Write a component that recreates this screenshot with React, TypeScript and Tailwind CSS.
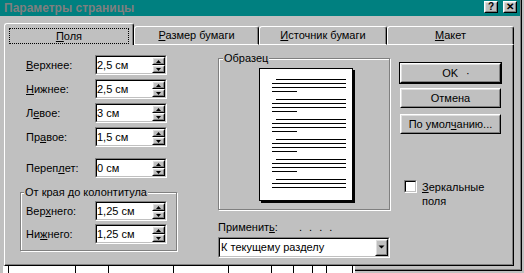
import React from "react";

const FONT = "font-['Liberation_Sans',Arial,sans-serif]";

function Sunken({ className = "", children }: { className?: string; children?: React.ReactNode }) {
  return (
    <div className={`border border-t-[#808080] border-l-[#808080] border-b-white border-r-white ${className}`}>
      <div className="h-full w-full border border-t-black border-l-black border-b-[#c0c0c0] border-r-[#c0c0c0] bg-white flex items-center">
        {children}
      </div>
    </div>
  );
}

function Raised({ className = "", children }: { className?: string; children?: React.ReactNode }) {
  return (
    <div className={`border border-t-white border-l-white border-b-black border-r-black bg-[#c0c0c0] ${className}`}>
      <div className="h-full w-full border border-t-[#dfdfdf] border-l-[#dfdfdf] border-b-[#808080] border-r-[#808080] flex items-center justify-center">
        {children}
      </div>
    </div>
  );
}

function Tri({ up }: { up?: boolean }) {
  return (
    <svg width="5" height="3" viewBox="0 0 5 3" className="block">
      {up ? <path d="M2.5 0 L5 3 L0 3 Z" fill="black" /> : <path d="M0 0 L5 0 L2.5 3 Z" fill="black" />}
    </svg>
  );
}

function SpinField({ value }: { value: string }) {
  return (
    <Sunken className="w-[72px] h-[20px]">
      <span className="flex-1 pl-[0px]">{value}</span>
      <div className="flex flex-col h-full w-[13px]">
        <Raised className="h-[8px] w-[13px]">
          <Tri up />
        </Raised>
        <Raised className="h-[8px] w-[13px]">
          <Tri />
        </Raised>
      </div>
    </Sunken>
  );
}

function Row({ label, value, labelW }: { label: React.ReactNode; value: string; labelW: string }) {
  return (
    <div className="flex items-center h-[20px]">
      <span className={labelW}>{label}</span>
      <SpinField value={value} />
    </div>
  );
}

function TitleBtn({ children }: { children: React.ReactNode }) {
  return (
    <Raised className="w-[14px] h-[12px]">
      <span className="text-[10px] font-bold leading-none">{children}</span>
    </Raised>
  );
}

function Tab({ w, children }: { w: string; children: React.ReactNode }) {
  return (
    <div
      className={`${w} h-[19px] border-t border-l border-white border-r border-r-black border-b border-b-white rounded-tl-[3px] rounded-tr-[3px] shadow-[inset_-1px_0_0_#808080] flex items-center justify-center`}
    >
      {children}
    </div>
  );
}

function Btn({ w = "w-[101px]", children }: { w?: string; children: React.ReactNode }) {
  return <Raised className={`${w} h-[20px]`}>{children}</Raised>;
}

function PageLines({ count }: { count: number }) {
  const widths = ["ml-[16px] w-[70px]", "ml-[12px] w-[74px]", "ml-[12px] w-[74px]", "ml-[12px] w-[25px]"];
  return (
    <div className="flex flex-col gap-[3px]">
      {widths.slice(0, count).map((c, i) => (
        <div key={i} className={`h-[1px] bg-black ${c}`} />
      ))}
    </div>
  );
}

const TICKS = [5, 72, 105, 170, 225, 268, 290, 309, 323, 349];

export default function App() {
  return (
    <div className={`w-[524px] h-[273px] overflow-hidden bg-[#c0c0c0] ${FONT} text-[11px] text-black leading-none flex flex-col`}>
      <div className="w-[522px] border-r border-black">
        <div className="border-r border-[#808080]">
          {/* title bar */}
          <div className="h-[16px] bg-[#008080] flex items-center justify-between pl-[4px] pr-[3px]">
            <span className="text-[12px] font-bold text-[#7f7f7f]">Параметры страницы</span>
            <div className="flex gap-[5px] self-start mt-[1px]">
              <TitleBtn>?</TitleBtn>
              <TitleBtn>✕</TitleBtn>
            </div>
          </div>

          {/* body */}
          <div className="pl-[4px] pr-[6px] pt-[7px]">
            {/* tabs */}
            <div className="flex items-end h-[22px]">
              <div className="w-[130px] h-[22px] border-t border-l border-white border-r border-r-black rounded-tl-[3px] rounded-tr-[3px] shadow-[inset_-1px_0_0_#808080] pt-[4px] pl-[4px]">
                <div className="w-[120px] h-[16px] border border-dotted border-black flex items-center justify-center">
                  <span>
                    <u>П</u>оля
                  </span>
                </div>
              </div>
              <Tab w="w-[125px]">
                <span>
                  <u>Р</u>азмер бумаги
                </span>
              </Tab>
              <Tab w="w-[128px]">
                <span>
                  <u>И</u>сточник бумаги
                </span>
              </Tab>
              <Tab w="w-[127px]">
                <span>
                  <u>М</u>акет
                </span>
              </Tab>
            </div>

            {/* panel */}
            <div className="h-[221px] border-l border-white border-r border-b border-r-black border-b-black shadow-[inset_-1px_-1px_0_#808080] flex">
              {/* left column */}
              <div className="ml-[15px] w-[157px] pt-[10px] flex flex-col">
                <div className="flex flex-col gap-[4px]">
                  <Row labelW="w-[75px] pl-[6px]" label={<><u>В</u>ерхнее:</>} value="2,5 см" />
                  <Row labelW="w-[75px] pl-[6px]" label={<><u>Н</u>ижнее:</>} value="2,5 см" />
                  <Row labelW="w-[75px] pl-[6px]" label={<>Л<u>е</u>вое:</>} value="3 см" />
                  <Row labelW="w-[75px] pl-[6px]" label={<>Пр<u>а</u>вое:</>} value="1,5 см" />
                </div>
                <div className="mt-[11px]">
                  <Row labelW="w-[75px] pl-[6px]" label={<>Переп<u>л</u>ет:</>} value="0 см" />
                </div>
                <div className="mt-[14px] relative h-[59px] border border-[#808080] shadow-[1px_1px_0_white,inset_1px_1px_0_white] pt-[8px] flex flex-col gap-[3px]">
                  <span className="absolute left-[3px] -top-[6px] bg-[#c0c0c0] px-[1px]">От края до колонтитула</span>
                  <Row labelW="w-[74px] pl-[5px]" label={<>Вер<u>х</u>него:</>} value="1,25 см" />
                  <Row labelW="w-[74px] pl-[5px]" label={<>Ни<u>ж</u>него:</>} value="1,25 см" />
                </div>
              </div>

              {/* middle column */}
              <div className="ml-[41px] w-[172px] pt-[13px] flex flex-col">
                <div className="relative h-[152px] border border-[#808080] shadow-[1px_1px_0_white,inset_1px_1px_0_white]">
                  <span className="absolute left-[4px] -top-[6px] bg-[#c0c0c0] px-[1px]">Образец</span>
                  <div className="ml-[40px] mt-[9px] w-[94px] h-[133px] bg-white border border-black shadow-[2px_2px_0_black] pt-[10px] flex flex-col gap-[7px]">
                    <PageLines count={4} />
                    <PageLines count={4} />
                    <PageLines count={4} />
                    <PageLines count={4} />
                    <PageLines count={4} />
                    <PageLines count={3} />
                  </div>
                </div>
                <div className="mt-[12px] flex h-[11px]">
                  <span>
                    Применит<u>ь</u>:
                  </span>
                  <span className="ml-[21px] tracking-[2px]">. . . .</span>
                </div>
                <Sunken className="mt-[4px] w-[172px] h-[21px]">
                  <span className="flex-1 pl-[1px]">К текущему разделу</span>
                  <Raised className="w-[13px] h-[17px]">
                    <svg width="7" height="6" viewBox="0 0 7 6" className="block">
                      <path d="M0.5 0.5 L6.5 0.5 L3.5 3.5 Z" fill="black" />
                    </svg>
                  </Raised>
                </Sunken>
              </div>

              {/* right column */}
              <div className="ml-[9px] w-[103px] pt-[17px] flex flex-col">
                <div className="border border-black w-[103px]">
                  <Btn>
                    <span>OK</span>
                    <span className="ml-[8px] -mr-[11px]">·</span>
                  </Btn>
                </div>
                <div className="mt-[4px] ml-[1px]">
                  <Btn>Отмена</Btn>
                </div>
                <div className="mt-[6px] ml-[1px]">
                  <Btn>
                    <span>
                      По умол<u>ч</u>анию...
                    </span>
                  </Btn>
                </div>
                <div className="mt-[46px] ml-[5px] flex items-start">
                  <Sunken className="w-[13px] h-[13px]" />
                  <span className="ml-[5px] leading-[14px]">
                    <u>З</u>еркальные
                    <br />
                    поля
                  </span>
                </div>
              </div>
            </div>
          </div>
        </div>
      </div>

      {/* bottom strip: window frame on the right, ruler of the document behind on the left */}
      <div className="flex h-[7px]">
        <div className="ml-[3px] w-[352px] h-full bg-white flex">
          {TICKS.map((x, i) => (
            <div key={i} className="w-[1px] h-full bg-black" style={{ marginLeft: i === 0 ? x : x - TICKS[i - 1] - 1 }} />
          ))}
        </div>
        <div className="w-[167px] h-[5px] border-r border-b border-black">
          <div className="h-full border-r border-b border-[#808080]" />
        </div>
      </div>
    </div>
  );
}
